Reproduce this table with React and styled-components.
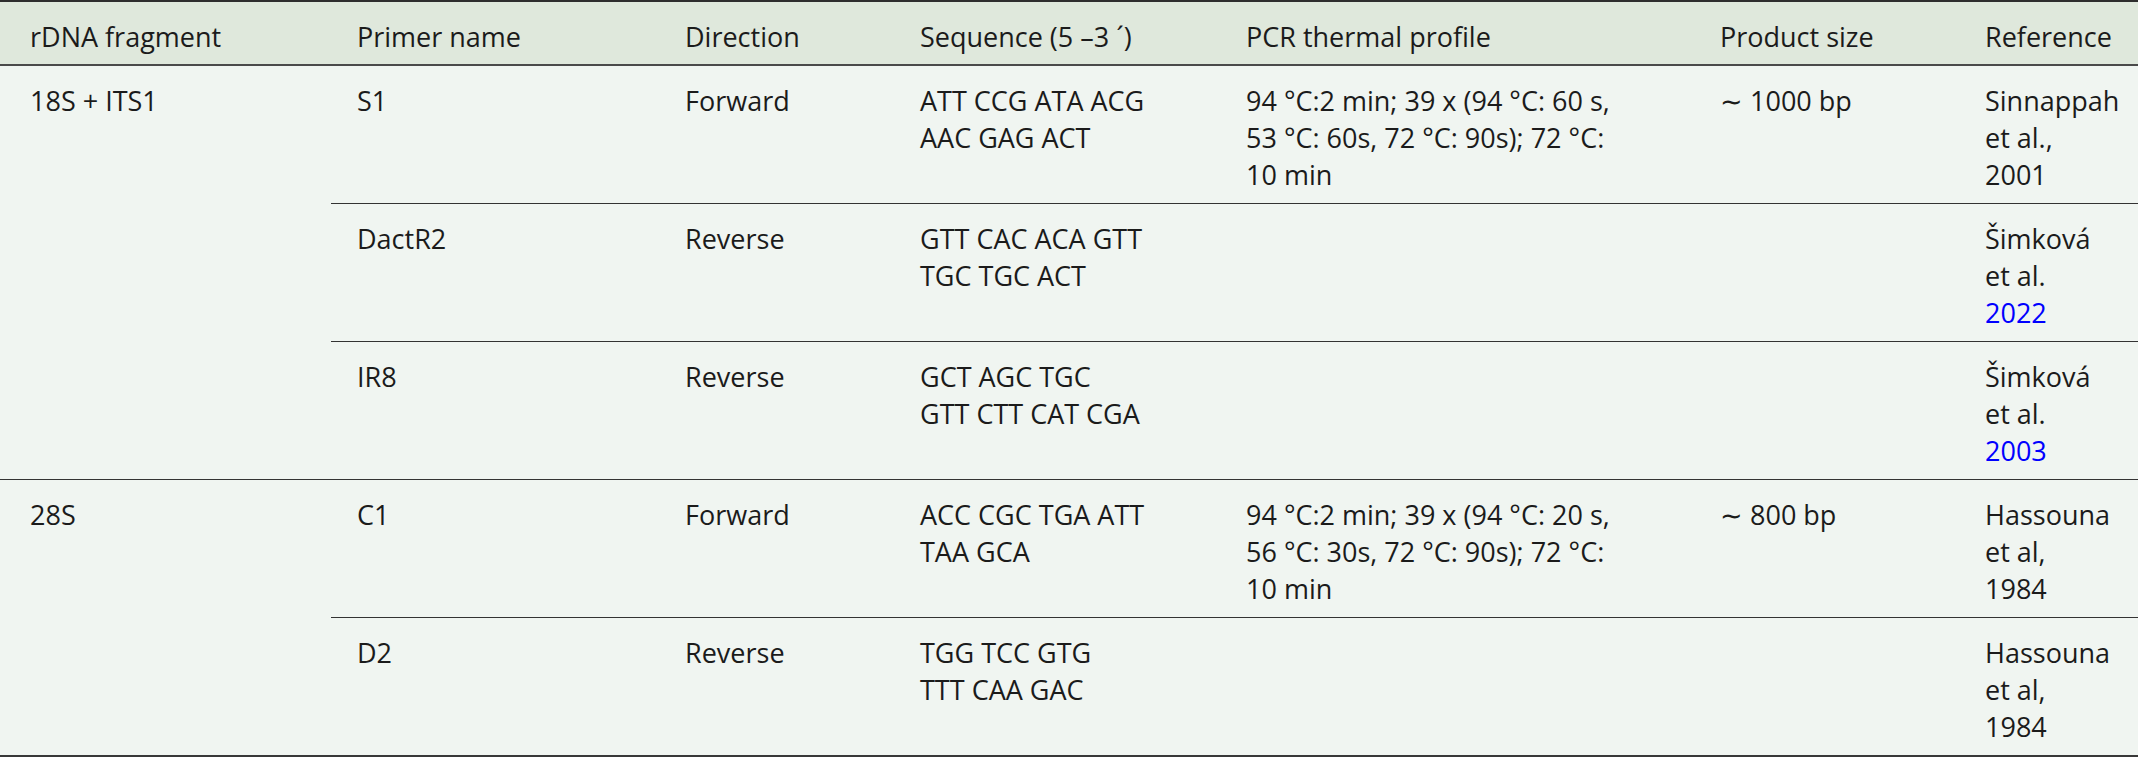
import React from 'react';
import styled, { createGlobalStyle } from 'styled-components';

const GlobalStyle = createGlobalStyle`
  html, body {
    margin: 0;
    padding: 0;
    background-color: #f0f5f1;
  }
  body {
    font-family: 'Open Sans', 'Noto Sans', sans-serif;
    color: #1b1b1b;
  }
`;

const Table = styled.table`
  width: 2138px;
  border-collapse: collapse;
  table-layout: fixed;
  background-color: #f0f5f1;
  border-top: 2px solid #2e2e2e;
  border-bottom: 3px solid #383838;
  font-size: 27px;
  line-height: 37px;
`;

const HeadRow = styled.tr`
  background-color: #dfe8dc;
  border-bottom: 2px solid #4a4a4a;
`;

const HeadCell = styled.th`
  font-weight: 400;
  text-align: left;
  white-space: nowrap;
  padding: 16px 0 9px ${({ $first }) => ($first ? '30px' : '26px')};
`;

const Row = styled.tr`
  & + & > td {
    border-top: 1px solid #333;
  }
`;

const Cell = styled.td`
  vertical-align: top;
  white-space: nowrap;
  padding: 16px 0 10px ${({ $first }) => ($first ? '30px' : '26px')};
`;

const Line = styled.span`
  display: block;
  color: ${({ $link }) => ($link ? '#0000ff' : 'inherit')};
`;

const widths = [331, 328, 235, 326, 474, 265, 179];

const headers = [
  'rDNA fragment',
  'Primer name',
  'Direction',
  'Sequence (5 \u20133 \u00b4)',
  'PCR thermal profile',
  'Product size',
  'Reference',
];

const groups = [
  {
    fragment: '18S + ITS1',
    primers: [
      {
        name: 'S1',
        direction: 'Forward',
        sequence: ['ATT CCG ATA ACG', 'AAC GAG ACT'],
        profile: ['94 \u00b0C:2 min; 39 x (94 \u00b0C: 60 s,', '53 \u00b0C: 60s, 72 \u00b0C: 90s); 72 \u00b0C:', '10 min'],
        size: '\u223c 1000 bp',
        reference: ['Sinnappah', 'et al.,', '2001'],
      },
      {
        name: 'DactR2',
        direction: 'Reverse',
        sequence: ['GTT CAC ACA GTT', 'TGC TGC ACT'],
        reference: ['\u0160imkov\u00e1', 'et al.'],
        year: '2022',
      },
      {
        name: 'IR8',
        direction: 'Reverse',
        sequence: ['GCT AGC TGC', 'GTT CTT CAT CGA'],
        reference: ['\u0160imkov\u00e1', 'et al.'],
        year: '2003',
      },
    ],
  },
  {
    fragment: '28S',
    primers: [
      {
        name: 'C1',
        direction: 'Forward',
        sequence: ['ACC CGC TGA ATT', 'TAA GCA'],
        profile: ['94 \u00b0C:2 min; 39 x (94 \u00b0C: 20 s,', '56 \u00b0C: 30s, 72 \u00b0C: 90s); 72 \u00b0C:', '10 min'],
        size: '\u223c 800 bp',
        reference: ['Hassouna', 'et al,', '1984'],
      },
      {
        name: 'D2',
        direction: 'Reverse',
        sequence: ['TGG TCC GTG', 'TTT CAA GAC'],
        reference: ['Hassouna', 'et al,', '1984'],
      },
    ],
  },
];

const Lines = ({ items = [], link }) => (
  <>
    {items.map((text, i) => (
      <Line key={i}>{text}</Line>
    ))}
    {link && <Line $link>{link}</Line>}
  </>
);

const App = () => {
  return (
    <>
      <GlobalStyle />
      <Table>
        <colgroup>
          {widths.map((w, i) => (
            <col key={i} style={{ width: w }} />
          ))}
        </colgroup>
        <thead>
          <HeadRow>
            {headers.map((h, i) => (
              <HeadCell key={h} $first={i === 0}>{h}</HeadCell>
            ))}
          </HeadRow>
        </thead>
        <tbody>
          {groups.map((group) =>
            group.primers.map((p, index) => (
              <Row key={p.name}>
                {index === 0 && (
                  <Cell $first rowSpan={group.primers.length}>{group.fragment}</Cell>
                )}
                <Cell>{p.name}</Cell>
                <Cell>{p.direction}</Cell>
                <Cell><Lines items={p.sequence} /></Cell>
                <Cell><Lines items={p.profile} /></Cell>
                <Cell>{p.size}</Cell>
                <Cell><Lines items={p.reference} link={p.year} /></Cell>
              </Row>
            ))
          )}
        </tbody>
      </Table>
    </>
  );
};

export default App;
